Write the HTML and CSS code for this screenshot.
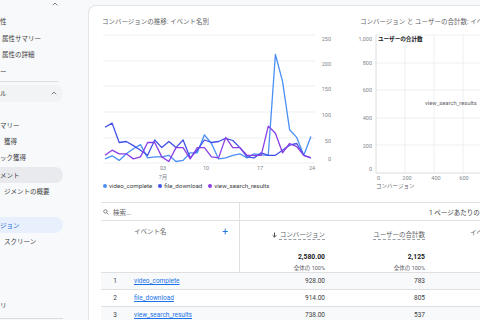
FILE: index.html
```html
<!DOCTYPE html>
<html lang="ja">
<head>
<meta charset="UTF-8">
<meta name="viewport" content="width=device-width, initial-scale=1.0">
<title>コンバージョン: イベント名</title>
<link rel="stylesheet" href="styles.css">
</head>
<body>
<div class="app">
<nav class="sidebar">
<div class="nav-top"><svg class="chev" viewBox="0 0 8 5"><polyline points="1,4.2 4,1.2 7,4.2"/></svg></div>
<div class="nav-item">性</div>
<div class="nav-item sub">属性サマリー</div>
<div class="nav-item sub">属性の詳細</div>
<div class="nav-item">ー</div>
<div class="nav-rule"></div>
<div class="nav-item pill open">ル<svg class="chev" viewBox="0 0 8 5"><polyline points="1,4.2 4,1.2 7,4.2"/></svg></div>
<div class="nav-gap"></div>
<div class="nav-item short">マリー</div>
<div class="nav-item short sub2">獲得</div>
<div class="nav-item short">ック獲得</div>
<div class="nav-item short pill active">メント</div>
<div class="nav-item short sub2">ジメントの概要</div>
<div class="nav-gap tall"></div>
<div class="nav-item short pill current">ジョン</div>
<div class="nav-item short sub2">スクリーン</div>
<div class="nav-gap big"></div>
<div class="nav-item short">リ</div>
<div class="nav-rule low"></div>
</nav>

<main class="main">
<div class="card">
<div class="charts">
<section class="chart-main">
<h2 class="chart-title">コンバージョンの推移: イベント名別</h2>
<svg class="plot" width="240" height="150" viewBox="0 0 240 150">
<g class="grid">
<line x1="2" y1="5" x2="214" y2="5"/>
<line x1="2" y1="31" x2="214" y2="31"/>
<line x1="2" y1="56" x2="214" y2="56"/>
<line x1="2" y1="82" x2="214" y2="82"/>
<line x1="2" y1="108" x2="214" y2="108"/>
<line x1="2" y1="133" x2="214" y2="133"/>
</g>
<g class="axis-label" text-anchor="end">
<text x="230" y="11">250</text>
<text x="230" y="36">200</text>
<text x="230" y="61">150</text>
<text x="230" y="87">100</text>
<text x="230" y="113">50</text>
<text x="230" y="131">0</text>
</g>
<g class="axis-label" text-anchor="middle">
<text x="62" y="140">03</text>
<text x="62" y="149">7月</text>
<text x="105" y="140">10</text>
<text x="159" y="140">17</text>
<text x="211" y="140">24</text>
</g>
<polyline class="series s-video" points="4,128.9 11.1,125.8 18.2,130.4 25.3,123.8 32.4,118.7 39.5,114.6 46.6,127.9 53.7,126.9 60.8,126.9 67.9,125.3 75,131.5 82.1,130.4 89.2,122.8 96.3,122.8 103.4,104.8 110.5,113.5 117.6,128.9 124.7,127.9 131.8,125.3 138.9,123.8 146,127.9 153.1,123.8 160.2,124.8 167.3,125.3 174.4,24.5 181.5,51.1 188.6,99.7 195.7,107.4 202.8,125.3 209.9,106.4"/>
<polyline class="series s-file" points="4,97.2 11.1,93.1 18.2,112.5 25.3,111.5 32.4,115.6 39.5,120.2 46.6,125.3 53.7,110 60.8,117.6 67.9,111.5 75,117.6 82.1,110 89.2,127.9 96.3,120.2 103.4,110 110.5,112.5 117.6,111.5 124.7,108.4 131.8,110.5 138.9,117.6 146,126.9 153.1,127.9 160.2,122.8 167.3,125.3 174.4,125.3 181.5,120.2 188.6,115.1 195.7,113.5 202.8,125.3 209.9,127.9"/>
<polyline class="series s-search" points="4,125.3 11.1,120.2 18.2,123.8 25.3,123.8 32.4,128.9 39.5,126.9 46.6,112.5 53.7,112.5 60.8,126.9 67.9,131.5 75,117.6 82.1,117.6 89.2,128.9 96.3,117.6 103.4,117.6 110.5,126.9 117.6,127.9 124.7,107.4 131.8,117.6 138.9,117.6 146,125.3 153.1,125.3 160.2,125.3 167.3,96.1 174.4,103.3 181.5,122.8 188.6,113.5 195.7,116.6 202.8,125.3 209.9,127.9"/>
</svg>
<ul class="legend">
<li><span class="dot d-video"></span>video_complete</li>
<li><span class="dot d-file"></span>file_download</li>
<li><span class="dot d-search"></span>view_search_results</li>
</ul>
</section>

<section class="chart-side">
<h2 class="chart-title">コンバージョン と ユーザーの合計数: イベント名別</h2>
<svg class="plot" width="160" height="160" viewBox="0 0 160 160">
<g class="grid">
<line x1="31" y1="5" x2="160" y2="5"/>
<line x1="31" y1="33" x2="160" y2="33"/>
<line x1="31" y1="60" x2="160" y2="60"/>
<line x1="31" y1="88" x2="160" y2="88"/>
<line x1="31" y1="115" x2="160" y2="115"/>
<line x1="60" y1="5" x2="60" y2="143"/>
<line x1="89" y1="5" x2="89" y2="143"/>
<line x1="118" y1="5" x2="118" y2="143"/>
<line x1="147" y1="5" x2="147" y2="143"/>
</g>
<g class="axis">
<line x1="31" y1="5" x2="31" y2="143"/>
<line x1="31" y1="143" x2="160" y2="143"/>
</g>
<g class="axis-label" text-anchor="end">
<text x="27" y="11">1,000</text>
<text x="27" y="35">800</text>
<text x="27" y="62">600</text>
<text x="27" y="90">400</text>
<text x="27" y="118">200</text>
<text x="27" y="141">0</text>
</g>
<g class="axis-label" text-anchor="middle">
<text x="62" y="150">200</text>
<text x="91" y="150">400</text>
<text x="119" y="150">600</text>
</g>
<text class="axis-label" x="32" y="150">0</text>
<text class="axis-name" x="31" y="157.5">コンバージョン</text>
<text class="plot-heading" x="33" y="11">ユーザーの合計数</text>
<text class="point-label" x="80" y="75">view_search_results</text>
</svg>
</section>
</div>

<div class="report">
<div class="search-row">
<div class="search-box">
<svg class="search-icon" viewBox="0 0 10 10"><circle cx="4" cy="4" r="2.8"/><line x1="6.1" y1="6.1" x2="9" y2="9"/></svg>
<span>検索...</span>
</div>
<div class="paging">1 ページあたりの行数: 10</div>
</div>

<div class="row head">
<div class="cell dim">
<span class="idx"></span>
<span class="name">イベント名</span>
<span class="add">+</span>
</div>
<div class="cell metric">
<div class="metric-name"><svg class="sort" viewBox="0 0 6 7"><line x1="3" y1="0.5" x2="3" y2="6"/><polyline points="0.8,3.8 3,6 5.2,3.8"/></svg><span class="dashed">コンバージョン</span></div>
<div class="total">2,580.00</div>
<div class="share">全体の 100%</div>
</div>
<div class="cell metric">
<div class="metric-name"><span class="dashed">ユーザーの合計数</span></div>
<div class="total">2,125</div>
<div class="share">全体の 100%</div>
</div>
<div class="cell extra">イベント数</div>
</div>

<div class="row item shade">
<div class="cell dim"><span class="idx">1</span><a class="name link" href="#">video_complete</a></div>
<div class="cell metric">928.00</div>
<div class="cell metric">783</div>
<div class="cell extra"></div>
</div>
<div class="row item">
<div class="cell dim"><span class="idx">2</span><a class="name link" href="#">file_download</a></div>
<div class="cell metric">914.00</div>
<div class="cell metric">805</div>
<div class="cell extra"></div>
</div>
<div class="row item shade">
<div class="cell dim"><span class="idx">3</span><a class="name link" href="#">view_search_results</a></div>
<div class="cell metric">738.00</div>
<div class="cell metric">537</div>
<div class="cell extra"></div>
</div>
</div>
</div>
</main>
</div>
</body>
</html>
```

FILE: styles.css
```css
body {
margin: 0;
width: 480px;
height: 320px;
overflow: hidden;
font-family: Roboto, "Noto Sans CJK JP", sans-serif;
background-color: #f8f9fa;
color: #3c4043;
}
.app {
display: flex;
height: 320px;
}

/* left navigation */
.sidebar {
width: 88px;
flex: none;
font-size: 6.5px;
overflow: hidden;
}
.nav-top {
height: 13px;
width: 58px;
display: flex;
justify-content: flex-end;
align-items: flex-start;
padding-top: 2px;
box-sizing: border-box;
}
.chev {
width: 6px;
height: 4px;
fill: none;
stroke: #5f6368;
stroke-width: 1.1;
}
.nav-item {
height: 16.5px;
width: 63px;
display: flex;
align-items: center;
white-space: nowrap;
box-sizing: border-box;
}
.nav-item.short {
height: 16px;
}
.nav-item.sub {
padding-left: 2px;
}
.nav-item.sub2 {
padding-left: 4px;
}
.nav-rule {
width: 58px;
height: 1px;
background-color: #dadce0;
margin: 2px 0 3px;
}
.nav-rule.low {
width: 63px;
margin: 5px 0 0;
}
.pill {
border-radius: 0 8px 8px 0;
}
.pill.open {
background-color: #f1f3f4;
justify-content: space-between;
padding-right: 6px;
}
.pill.active {
background-color: #e8eaed;
margin-top: 2px;
}
.pill.current {
background-color: #e8f0fe;
color: #1967d2;
}
.nav-gap {
height: 15.5px;
}
.nav-gap.tall {
height: 18px;
}
.nav-gap.big {
height: 48px;
}

/* main card */
.main {
flex: 1;
min-width: 0;
padding-top: 5px;
}
.card {
width: 420px;
height: 320px;
background-color: #fff;
border-top: 1px solid #e3e5e8;
border-left: 1px solid #e3e5e8;
border-top-left-radius: 8px;
padding: 11px 0 0 12px;
box-sizing: border-box;
}
.charts {
display: flex;
align-items: flex-start;
}
.chart-main {
width: 244px;
flex: none;
}
.chart-side {
width: 164px;
flex: none;
}
.chart-title {
margin: 0 0 3px;
font-size: 6.5px;
line-height: 10px;
font-weight: 400;
color: #5f6368;
white-space: nowrap;
padding-left: 1px;
}
.chart-side .chart-title {
padding-left: 15px;
}
.plot {
display: block;
overflow: visible;
}
.grid line {
stroke: #eceff1;
stroke-width: 1;
}
.axis line {
stroke: #dadce0;
stroke-width: 1;
}
.axis-label {
font-size: 5.5px;
fill: #80868b;
}
.axis-name {
font-size: 5.5px;
fill: #5f6368;
}
.plot-heading {
font-size: 5.6px;
font-weight: 700;
fill: #202124;
}
.point-label {
font-size: 5.8px;
fill: #5f6368;
}
.series {
fill: none;
stroke-width: 1.3;
stroke-linejoin: round;
}
.s-video {
stroke: #4a8ff5;
}
.s-file {
stroke: #4150e6;
}
.s-search {
stroke: #8a3fe6;
}
.legend {
list-style: none;
margin: 0;
padding: 0 0 0 2px;
height: 12px;
display: flex;
align-items: center;
gap: 6px;
font-size: 6.2px;
color: #3c4043;
}
.legend li {
display: flex;
align-items: center;
}
.dot {
width: 4px;
height: 4px;
border-radius: 50%;
margin-right: 2px;
}
.d-video {
background-color: #4a8ff5;
}
.d-file {
background-color: #4150e6;
}
.d-search {
background-color: #8a3fe6;
}

/* table */
.report {
margin-top: 10px;
width: 420px;
border-top: 1px solid #e0e0e0;
font-size: 6.5px;
}
.search-row {
display: flex;
height: 18px;
border-bottom: 1px solid #e0e0e0;
box-sizing: border-box;
}
.search-box {
width: 139px;
flex: none;
display: flex;
align-items: center;
gap: 4px;
padding-left: 2px;
border-right: 1px solid #e0e0e0;
box-sizing: border-box;
color: #5f6368;
}
.search-icon {
width: 6px;
height: 6px;
fill: none;
stroke: #5f6368;
stroke-width: 1.3;
}
.paging {
padding-left: 189px;
display: flex;
align-items: center;
white-space: nowrap;
color: #3c4043;
}
.row {
display: grid;
grid-template-columns: 139px 91px 100px 90px;
border-bottom: 1px solid #e0e0e0;
}
.row.head {
height: 52px;
box-sizing: border-box;
}
.row.item {
height: 17px;
box-sizing: border-box;
}
.row.shade {
background-color: #f8f9fa;
}
.cell {
display: flex;
align-items: center;
white-space: nowrap;
}
.head .cell {
align-items: flex-start;
padding-top: 6px;
}
.head .dim {
border-right: 1px solid #e0e0e0;
}
.idx {
width: 28px;
flex: none;
text-align: center;
color: #3c4043;
}
.name {
padding-left: 5px;
line-height: 10px;
color: #5f6368;
}
.add {
margin-left: auto;
margin-right: 11px;
color: #1a73e8;
font-size: 10px;
line-height: 10px;
}
.link {
color: #1a73e8;
text-decoration: underline;
text-underline-offset: 1px;
}
.metric {
justify-content: flex-end;
padding-right: 6px;
color: #3c4043;
}
.head .metric {
flex-direction: column;
align-items: flex-end;
}
.metric-name {
display: flex;
align-items: center;
gap: 3px;
line-height: 10px;
color: #5f6368;
}
.sort {
width: 5px;
height: 6px;
fill: none;
stroke: #3c4043;
stroke-width: 1.1;
}
.dashed {
text-decoration: underline dashed #9aa0a6;
text-underline-offset: 2px;
}
.total {
margin-top: 12px;
line-height: 10px;
font-size: 6.8px;
font-weight: 700;
color: #202124;
}
.share {
margin-top: 2px;
line-height: 8px;
font-size: 5.5px;
color: #5f6368;
}
.extra {
padding-left: 39px;
color: #5f6368;
}
```
